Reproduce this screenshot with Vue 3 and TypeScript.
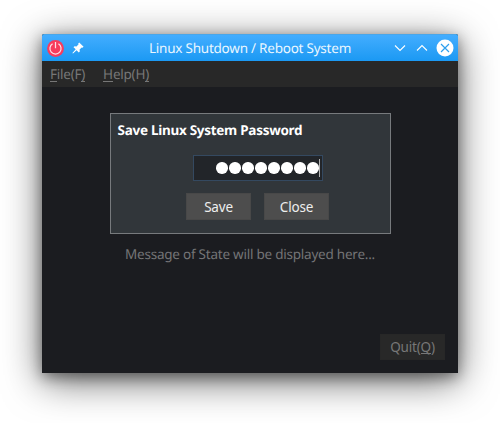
<script setup lang="ts">
import { ref } from 'vue'

const password = ref('password')
const menus = [
  { key: 'F', rest: 'ile(F' },
  { key: 'H', rest: 'elp(H' },
]
</script>

<template>
  <div class="desktop">
    <main class="window">
      <header class="titlebar">
        <svg class="power" viewBox="0 0 18 18">
          <circle cx="9" cy="9" r="8.9" />
          <path d="M5.9 4a5.9 5.9 0 1 0 6.2 0M9 2v6.8" />
        </svg>
        <svg class="pin" viewBox="0 0 12 12">
          <path d="M7.2 .4 11.6 4.7 10.4 5.8 9.7 5.5 7.6 7.6 7.8 9.6 6.8 10.5 4.6 8.2 1 11.6 .4 11 3.7 7.3 1.5 5.2 2.5 4.2 4.5 4.4 6.6 2.3 6.2 1.4Z" />
        </svg>
        <h1>Linux Shutdown / Reboot System</h1>
        <svg class="chevron" viewBox="0 0 12 8"><path d="m1 1.5 5 5 5-5" /></svg>
        <svg class="chevron up" viewBox="0 0 12 8"><path d="m1 6.5 5-5 5 5" /></svg>
        <svg class="close" viewBox="0 0 18 18">
          <circle cx="9" cy="9" r="8.5" />
          <path d="m5 5 8 8m0-8-8 8" />
        </svg>
      </header>
      <nav class="menubar">
        <span v-for="menu in menus" :key="menu.key" class="menu"><u>{{ menu.key }}</u>{{ menu.rest }}<u>)</u></span>
      </nav>
      <section class="content">
        <form class="dialog" @submit.prevent>
          <h2>Save Linux System Password</h2>
          <div class="field">
            <i v-for="n in password.length" :key="n" class="dot"></i>
            <i class="caret"></i>
          </div>
          <div class="actions">
            <button type="button">Save</button>
            <button type="button">Close</button>
          </div>
        </form>
        <p class="status">Message of State will be displayed here...</p>
        <button class="quit" type="button">Quit(<u>Q</u>)</button>
      </section>
    </main>
  </div>
</template>

<style>
body {
  margin: 0;
  background: #fff;
}
</style>

<style scoped>
* {
  box-sizing: border-box;
}
.desktop {
  width: 500px;
  height: 423px;
  padding: 34px 42px 50px;
  overflow: hidden;
  font: 13.5px/20px "Noto Sans", sans-serif;
  letter-spacing: -0.23px;
  text-rendering: geometricPrecision;
}
.window {
  height: 339px;
  background: #1b1c20;
  border-radius: 2px 2px 0 0;
  box-shadow: 0 8px 38px rgba(0, 0, 0, 0.6), 0 4px 14px rgba(0, 0, 0, 0.4);
}
.titlebar {
  display: flex;
  align-items: center;
  height: 27px;
  padding: 0 4px 0 5px;
  border-radius: 2px 2px 0 0;
  background: linear-gradient(#43adff, #1b99f3);
  border-top: 1px solid #49a6e9;
}
svg {
  flex: none;
  fill: none;
}
.power {
  width: 17px;
  height: 17px;
}
.power circle {
  fill: #f83c5d;
}
.power path {
  stroke: #ffe0e8;
  stroke-width: 1.3;
}
.pin {
  width: 12px;
  height: 12px;
  margin-left: 8px;
  margin-top: -1px;
}
.pin path {
  fill: #fff;
}
h1 {
  flex: 1;
  margin: 0;
  padding-left: 22px;
  color: #e9f6ff;
  font-size: 13.5px;
  line-height: 20px;
  font-weight: 400;
  text-align: center;
  white-space: nowrap;
}
.chevron {
  width: 12px;
  height: 8px;
  stroke: #fff;
  stroke-width: 1.1;
}
.up {
  margin: 0 8px 0 10px;
}
.close {
  width: 18px;
  height: 18px;
}
.close circle {
  fill: #fff;
}
.close path {
  stroke: #2c9fee;
  stroke-width: 1.15;
}
.menubar {
  display: flex;
  gap: 18px;
  height: 26px;
  padding: 3px 8px;
  background: #282828;
  color: #777;
}
u {
  text-decoration: none;
  box-shadow: inset 0 -1px #777;
  display: inline-block;
  height: 17px;
  line-height: 20px;
  vertical-align: top;
}
.menu u {
  height: 18px;
}
.content {
  display: flex;
  flex-direction: column;
  align-items: center;
  height: 286px;
  padding: 26px 13px 13px;
}
.dialog {
  display: flex;
  flex-direction: column;
  width: 281px;
  height: 121px;
  padding: 6px 7px;
  border: 1px solid #777a7d;
  background: #31363a;
}
h2 {
  margin: 0;
  color: #fff;
  font-size: 13.5px;
  letter-spacing: -0.28px;
  line-height: 20px;
  font-weight: 700;
}
.field {
  display: flex;
  align-items: center;
  justify-content: flex-end;
  gap: 1.5px;
  width: 130px;
  height: 26px;
  margin: 15px 0 0 75px;
  padding-right: 2px;
  border: 1px solid #344960;
  background: #222529;
}
.dot {
  width: 11.5px;
  height: 11.5px;
  border-radius: 50%;
  background: #fff;
}
.caret {
  width: 1px;
  height: 18px;
  margin-left: -1.5px;
  background: #b5b5b5;
}
.actions {
  display: flex;
  gap: 13px;
  margin: 12px 0 0 68px;
}
button {
  width: 65px;
  height: 27px;
  padding: 0;
  border: 1px solid #484848;
  background: #4d4d4d;
  color: #eee;
  font: 13.5px/20px "Noto Sans", sans-serif;
  letter-spacing: -0.2px;
}
.actions button {
  padding-left: 1px;
}
.status {
  margin: 10px 0 0;
  color: #747476;
  white-space: nowrap;
}
.quit {
  height: 26px;
  margin: auto 0 0 auto;
  border-color: #272727;
  background: #282828;
  color: #777;
}
</style>
